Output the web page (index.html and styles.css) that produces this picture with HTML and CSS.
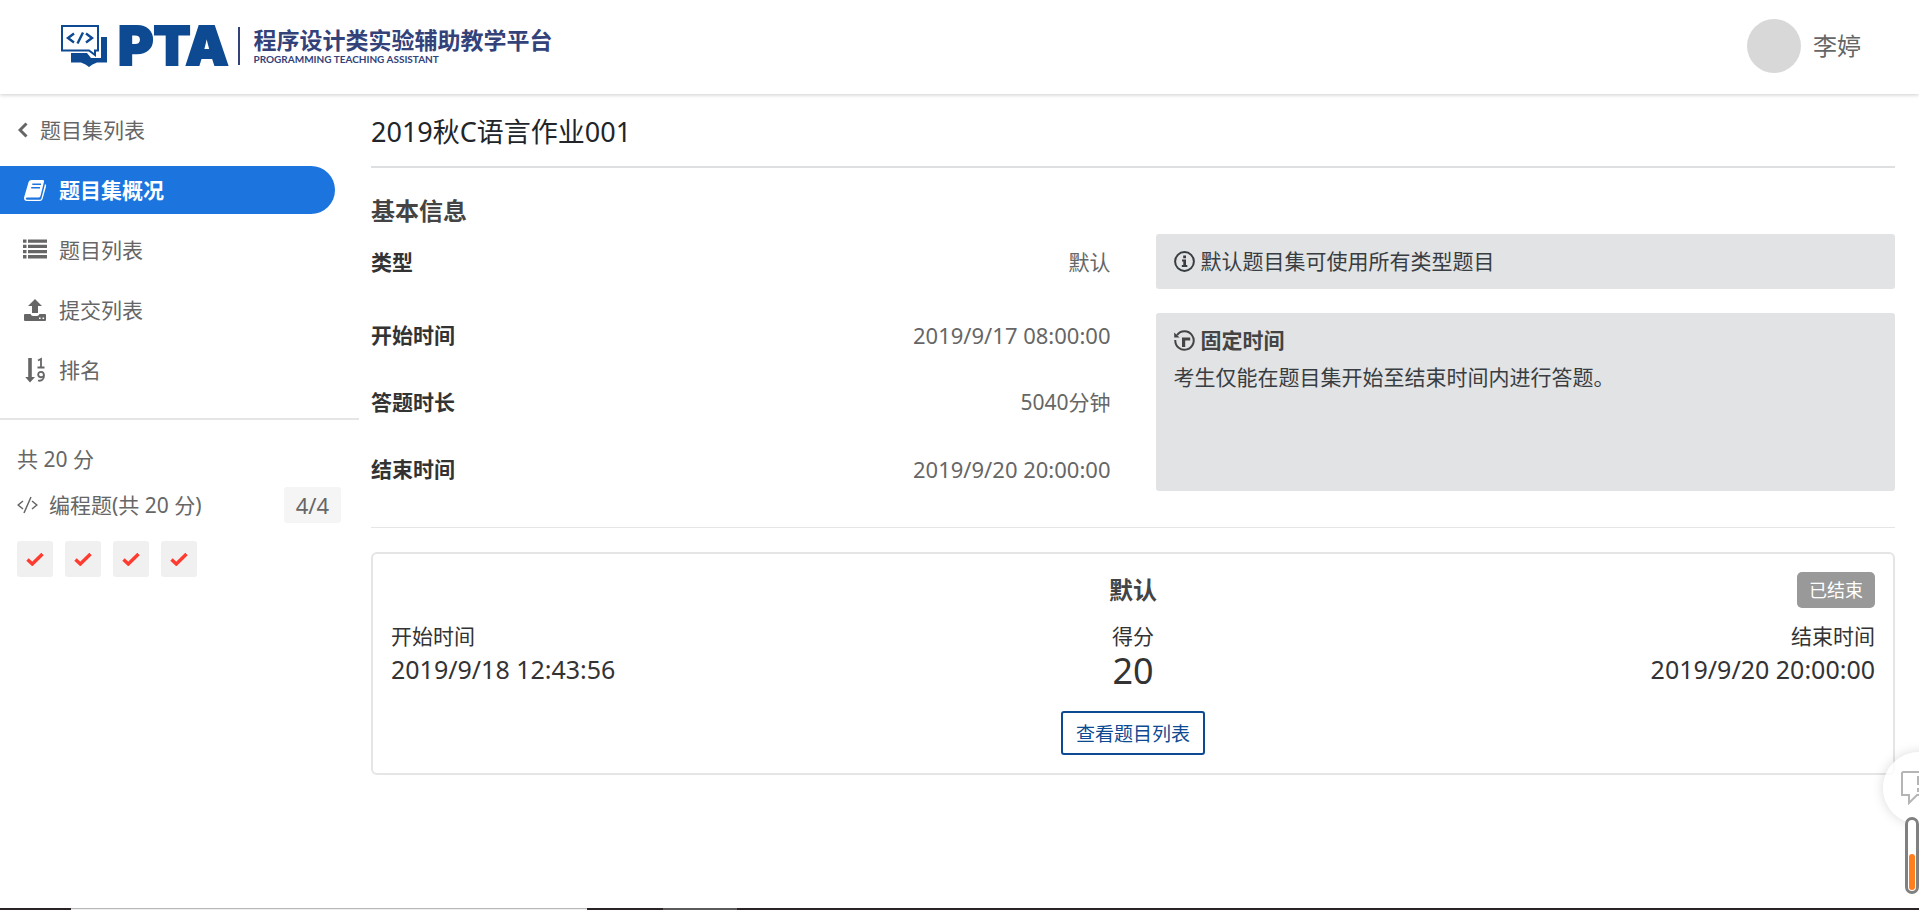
FILE: index.html
```html
<!DOCTYPE html>
<html lang="zh-CN">
<head>
    <meta charset="UTF-8">
    <meta name="viewport" content="width=device-width, initial-scale=1.0">
    <title>2019秋C语言作业001</title>
    <link rel="stylesheet" href="styles.css">
</head>
<body>
    <header class="header">
        <a class="logo" href="#">
            <svg class="logo-icon" viewBox="0 0 46 42" aria-hidden="true">
                <path fill="#0d4a91" d="M10 12H46V37.500H36Q31 39 28 42Q25 39 20 37.500H10Z"/>
                <path fill="#fff" d="M9 0H40V33H30L26 28H9Z"/>
                <path fill="#fff" stroke="#0d4a91" stroke-width="2" d="M1 1H37V25.500H34V30L28 25.500H1Z"/>
                <path fill="none" stroke="#0d4a91" stroke-width="2.400" d="M13 8.500L7 13L13 17.500M25 8.500L31 13L25 17.500M22 7.500L16.500 18.500"/>
            </svg>
            <span class="logo-name">PTA</span>
            <span class="logo-text">
                <span class="logo-cn">程序设计类实验辅助教学平台</span>
                <span class="logo-en">PROGRAMMING TEACHING ASSISTANT</span>
            </span>
        </a>
        <a class="user" href="#">
            <span class="avatar"></span>
            <span>李婷</span>
        </a>
    </header>

    <div class="layout">
        <aside class="sidebar">
            <nav>
                <a class="back" href="#">
                    <svg class="back-icon" viewBox="0 0 10 16" aria-hidden="true"><path d="M8.500 1.500L2 8L8.500 14.500" fill="none" stroke="currentColor" stroke-width="3"/></svg>
                    题目集列表
                </a>
                <ul class="menu">
                    <li>
                        <a class="menu-link active" href="#">
                            <svg class="menu-icon" viewBox="0 0 24 24" aria-hidden="true">
                                <path fill="currentColor" d="M8.500 2H20q1.500 0 1 1.700L17.500 18q-.5 1.500-2 1.500H4.500q-1.600 0-1.800 1 .2 1.200 1.800 1.200H17q1 0 1.400-1.200L22 6q1.600.8 1 2.600L19.600 21q-.8 2-2.600 2H4q-3 0-3-3.200L5.600 4Q6.300 2 8.500 2Z"/>
                                <path stroke="#1c74de" stroke-width="1.400" d="M9.300 6.200H18M8.200 9.700H17"/>
                            </svg>
                            题目集概况
                        </a>
                    </li>
                    <li>
                        <a class="menu-link" href="#">
                            <svg class="menu-icon" viewBox="0 0 24 24" aria-hidden="true"><path fill="currentColor" d="M0 1.500h3.500v3.300H0zM5 1.500h19v3.300H5zM0 6.700h3.500v3.300H0zM5 6.700h19v3.300H5zM0 11.900h3.500v3.300H0zM5 11.900h19v3.300H5zM0 17.100h3.500v3.300H0zM5 17.100h19v3.300H5z"/></svg>
                            题目列表
                        </a>
                    </li>
                    <li>
                        <a class="menu-link" href="#">
                            <svg class="menu-icon" viewBox="0 0 24 24" aria-hidden="true"><path fill="currentColor" fill-rule="evenodd" d="M12 1L19 8H15V15H9V8H5ZM1 17q0-1 1-1H7.500q.8 2 2.500 2h4q1.700 0 2.500-2H22q1 0 1 1v5q0 1-1 1H2q-1 0-1-1ZM16 19.500v1.600h1.600v-1.600ZM19.500 19.500v1.600h1.600v-1.600Z"/></svg>
                            提交列表
                        </a>
                    </li>
                    <li>
                        <a class="menu-link" href="#">
                            <svg class="menu-icon" viewBox="0 0 24 24" aria-hidden="true">
                                <path fill="currentColor" d="M5.200 0h3.600v19H12L7 24.500 2.200 19h3z"/>
                                <path fill="none" stroke="currentColor" stroke-width="1.800" d="M15 2.500L18 1V9.500M14.500 9.500H21.500M15 22.500C19 23.500 21 21 21 17.500C21 12.500 15.200 13 15.200 16.500C15.200 20 20 20 20.800 17.500"/>
                            </svg>
                            排名
                        </a>
                    </li>
                </ul>
            </nav>
            <section class="score">
                <p>共 20 分</p>
                <div class="score-row">
                    <svg class="code-icon" viewBox="0 0 21 18" aria-hidden="true"><path d="M6 5L1.200 9L6 13M15 5L19.800 9L15 13M14 1L7 17" fill="none" stroke="currentColor" stroke-width="1.500"/></svg>
                    <span>编程题(共 20 分)</span>
                    <span class="count">4/4</span>
                </div>
                <div class="checks">
                    <a class="check" href="#" aria-label="1"><svg class="check-icon" viewBox="0 0 18 14" aria-hidden="true"><path d="M1.500 7.500L6.300 12L16.500 2" fill="none" stroke="#ff3b30" stroke-width="3.400"/></svg></a>
                    <a class="check" href="#" aria-label="2"><svg class="check-icon" viewBox="0 0 18 14" aria-hidden="true"><path d="M1.500 7.500L6.300 12L16.500 2" fill="none" stroke="#ff3b30" stroke-width="3.400"/></svg></a>
                    <a class="check" href="#" aria-label="3"><svg class="check-icon" viewBox="0 0 18 14" aria-hidden="true"><path d="M1.500 7.500L6.300 12L16.500 2" fill="none" stroke="#ff3b30" stroke-width="3.400"/></svg></a>
                    <a class="check" href="#" aria-label="4"><svg class="check-icon" viewBox="0 0 18 14" aria-hidden="true"><path d="M1.500 7.500L6.300 12L16.500 2" fill="none" stroke="#ff3b30" stroke-width="3.400"/></svg></a>
                </div>
            </section>
        </aside>

        <main class="main">
            <h1 class="title">2019秋C语言作业001</h1>
            <h2 class="subtitle">基本信息</h2>
            <div class="info">
                <dl class="fields single">
                    <div class="field"><dt>类型</dt><dd>默认</dd></div>
                </dl>
                <div class="notice">
                    <p class="notice-line">
                        <svg class="notice-icon" viewBox="0 0 21 21" aria-hidden="true">
                            <circle cx="10.500" cy="10.500" r="9.400" fill="none" stroke="currentColor" stroke-width="2"/>
                            <path fill="currentColor" d="M9.200 4.500h2.800v2.700H9.200zM8 8.600h4v5.500h1.300v2H7.800v-2h1.500v-3.500H8z"/>
                        </svg>
                        默认题目集可使用所有类型题目
                    </p>
                </div>
                <dl class="fields">
                    <div class="field"><dt>开始时间</dt><dd class="date">2019/9/17 08:00:00</dd></div>
                    <div class="field"><dt>答题时长</dt><dd>5040分钟</dd></div>
                    <div class="field"><dt>结束时间</dt><dd class="date">2019/9/20 20:00:00</dd></div>
                </dl>
                <div class="notice">
                    <h3 class="notice-line notice-title">
                        <svg class="notice-icon" viewBox="0 0 21 21" aria-hidden="true">
                            <path d="M3 5.200A9.200 9.200 0 1 1 1.300 10" fill="none" stroke="currentColor" stroke-width="2"/>
                            <path fill="currentColor" d="M.2 2.600L5.600 7.600H.2ZM8 7.600H16.200V10.600H11.200V17H8Z"/>
                        </svg>
                        固定时间
                    </h3>
                    <p>考生仅能在题目集开始至结束时间内进行答题。</p>
                </div>
            </div>
            <hr class="divider">
            <section class="card">
                <div class="card-head">
                    <h2 class="card-title">默认</h2>
                    <span class="status">已结束</span>
                </div>
                <div class="card-body">
                    <div>
                        <p class="label">开始时间</p>
                        <p class="time">2019/9/18 12:43:56</p>
                    </div>
                    <div class="center">
                        <p class="label">得分</p>
                        <p class="points">20</p>
                    </div>
                    <div class="right">
                        <p class="label">结束时间</p>
                        <p class="time">2019/9/20 20:00:00</p>
                    </div>
                </div>
                <button class="button" type="button">查看题目列表</button>
            </section>
        </main>
    </div>

    <!-- Floating tools at the right edge -->
    <button class="feedback" type="button" aria-label="反馈">
        <svg class="feedback-icon" viewBox="0 0 36 36" aria-hidden="true">
            <path d="M2 3H34V26H16L8 34V26H1V4Z" fill="none" stroke="#b5b5b5" stroke-width="2"/>
            <path d="M16 7h4v9h-4zM16 19h4v4h-4z" fill="#b5b5b5"/>
        </svg>
    </button>
    <div class="meter"><div class="meter-value"></div></div>
    <footer class="strip">
        <span class="strip-light"></span>
        <span class="strip-gray"></span>
    </footer>
</body>
</html>
```

FILE: styles.css
```css
/* General Styles */
* {
    margin: 0;
    padding: 0;
    box-sizing: border-box;
}

body {
    font-family: "Noto Sans", "Noto Sans CJK SC", sans-serif;
    font-size: 21px;
    line-height: 32px;
    color: #333;
    background-color: #fff;
    min-height: 100vh;
}

a {
    color: inherit;
    text-decoration: none;
}

/* Header */
.header {
    display: flex;
    align-items: center;
    justify-content: space-between;
    height: 94px;
    padding: 0 58px 2px 61px;
    box-shadow: 0 1px 4px rgba(0, 0, 0, 0.2);
}

.logo {
    display: flex;
    align-items: center;
    color: #0d4a91;
}

.logo-icon {
    width: 46px;
    height: 42px;
    margin-right: 11px;
}

.logo-name {
    font-family: Inter, sans-serif;
    font-size: 54px;
    font-weight: 900;
    line-height: 54px;
    -webkit-text-stroke: 2px #0d4a91;
}

.logo-text {
    display: flex;
    flex-direction: column;
    margin-left: 10px;
    padding-left: 13px;
    border-left: 2px solid #34427a;
    color: #34427a;
}

.logo-cn {
    font-size: 23px;
    font-weight: bold;
    line-height: 26px;
}

.logo-en {
    font-family: Lato, sans-serif;
    font-size: 10px;
    font-weight: bold;
    line-height: 12px;
}

.user {
    display: flex;
    align-items: center;
    gap: 12px;
    font-size: 24px;
    color: #666;
}

.avatar {
    width: 54px;
    height: 54px;
    border-radius: 50%;
    background-color: #d8d8d8;
}

/* Page columns */
.layout {
    display: flex;
}

.sidebar {
    width: 359px;
    flex-shrink: 0;
    padding-top: 12px;
    color: #666;
}

/* Sidebar menu */
.back {
    display: flex;
    align-items: center;
    gap: 12px;
    height: 48px;
    padding-left: 18px;
}

.back-icon {
    width: 10px;
    height: 16px;
}

.menu {
    display: flex;
    flex-direction: column;
    gap: 12px;
    list-style-type: none;
    padding: 12px 24px 24px 0;
}

.menu-link {
    display: flex;
    align-items: center;
    gap: 12px;
    height: 48px;
    padding-left: 23px;
}

.menu-link.active {
    background-color: #1c74de;
    border-radius: 0 24px 24px 0;
    color: #fff;
    font-weight: bold;
}

.menu-icon {
    width: 24px;
    height: 24px;
    overflow: visible;
}

/* Score summary */
.score {
    display: flex;
    flex-direction: column;
    gap: 12px;
    padding: 23px 18px 0 17px;
    border-top: 2px solid #e5e5e5;
}

.score-row {
    display: flex;
    align-items: center;
    gap: 11px;
}

.code-icon {
    width: 21px;
    height: 18px;
}

.count {
    margin-left: auto;
    padding: 2px 12px;
    border-radius: 3px;
    background-color: #f5f5f5;
    font-size: 22px;
}

.checks {
    display: flex;
    gap: 12px;
    padding-top: 6px;
}

.check {
    display: flex;
    align-items: center;
    justify-content: center;
    width: 36px;
    height: 36px;
    border-radius: 3px;
    background-color: #f0f0f0;
}

.check-icon {
    width: 18px;
    height: 14px;
}

/* Main content */
.main {
    flex: 1;
    padding: 0 24px 0 12px;
}

.title {
    padding: 18px 0 14px;
    border-bottom: 2px solid #dedfe0;
    font-size: 27px;
    font-weight: normal;
    line-height: 40px;
    color: #212529;
}

.subtitle {
    padding: 25px 0 5px;
    font-size: 24px;
    line-height: 36px;
    color: #444;
}

.info {
    display: grid;
    grid-template-columns: 1fr 1fr;
    grid-template-rows: 55px 178px;
    gap: 24px 45px;
}

.fields {
    display: flex;
    flex-direction: column;
    justify-content: space-between;
    padding: 6px 0;
}

.fields.single {
    justify-content: center;
}

.field {
    display: flex;
    justify-content: space-between;
    align-items: center;
}

.field dt {
    font-weight: bold;
}

.field dd {
    color: #666;
}

.field .date {
    font-size: 22px;
}

.notice {
    padding: 12px 18px;
    border-radius: 3px;
    background-color: #e2e3e5;
    line-height: 31px;
    color: #383d41;
}

.notice-line {
    display: flex;
    align-items: center;
    gap: 6px;
}

.notice-title {
    margin-bottom: 6px;
    font-size: 21px;
    color: #444;
}

.notice-icon {
    width: 21px;
    height: 21px;
}

.divider {
    margin: 36px 0 24px;
    border: none;
    border-top: 1px solid #e5e5e5;
}

/* Result card */
.card {
    padding: 18px;
    border: 2px solid #e5e5e5;
    border-radius: 6px;
}

.card-head {
    display: grid;
    grid-template-columns: 1fr auto 1fr;
    margin-bottom: 13px;
}

.card-title {
    grid-column: 2;
    font-size: 24px;
    line-height: 36px;
    color: #444;
}

.status {
    justify-self: end;
    padding: 0 12px;
    border-radius: 5px;
    background-color: #999;
    font-size: 18px;
    line-height: 36px;
    color: #fff;
}

.card-body {
    display: grid;
    grid-template-columns: 1fr 1fr 1fr;
    line-height: 36px;
}

.label {
    line-height: 30px;
}

.time {
    font-size: 25px;
}

.points {
    font-size: 36px;
    line-height: 40px;
}

.center {
    text-align: center;
}

.right {
    text-align: right;
}

.button {
    display: block;
    margin: 20px auto 0;
    padding: 6px 13px 4px;
    border: 2px solid #0d4a91;
    border-radius: 3px;
    background-color: #fff;
    font-family: inherit;
    font-size: 19px;
    line-height: 30px;
    color: #0d4a91;
    cursor: pointer;
}

/* Floating tools */
.feedback {
    position: fixed;
    right: -36px;
    bottom: 86px;
    width: 72px;
    height: 72px;
    border: none;
    border-radius: 50%;
    background-color: rgba(255, 255, 255, 0.8);
    box-shadow: 0 0 12px rgba(0, 0, 0, 0.15);
}

.feedback-icon {
    width: 36px;
    height: 36px;
}

.meter {
    position: fixed;
    right: 0;
    bottom: 16px;
    display: flex;
    align-items: flex-end;
    width: 14px;
    height: 77px;
    padding: 1px;
    border: 3px solid #808080;
    border-radius: 7px;
    background-color: #fff;
}

.meter-value {
    width: 100%;
    height: 36px;
    border-radius: 3px;
    background-color: #ff7f1f;
}

/* Bottom edge strip */
.strip {
    position: fixed;
    left: 0;
    right: 0;
    bottom: 0;
    display: flex;
    height: 2px;
    padding-left: 71px;
    background-color: #2a2428;
}

.strip-light {
    width: 516px;
    margin-right: 76px;
    border-top: 1px solid #b8b8b8;
    background-color: #f0f0f0;
}

.strip-gray {
    width: 74px;
    background-color: #5c5a5b;
}
```
